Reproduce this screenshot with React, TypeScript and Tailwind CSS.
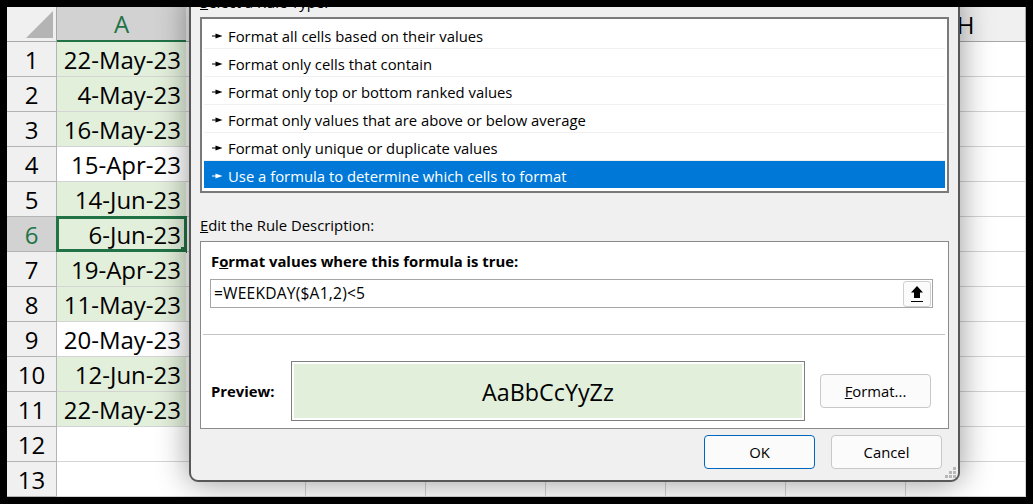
const rows = [
  '22-May-23', '4-May-23', '16-May-23', '15-Apr-23', '14-Jun-23', '6-Jun-23',
  '19-Apr-23', '11-May-23', '20-May-23', '12-Jun-23', '22-May-23', '', '',
];
const plainRows = [3, 8, 11, 12];
const ruleTypes = [
  'Format all cells based on their values',
  'Format only cells that contain',
  'Format only top or bottom ranked values',
  'Format only values that are above or below average',
  'Format only unique or duplicate values',
];
const otherCols = ['B', 'C', 'D', 'E', 'F', 'G', 'H'];

function RuleArrow({ light }: { light?: boolean }) {
  return (
    <svg width="11" height="6" viewBox="0 0 11 6" className="shrink-0" fill={light ? '#ffffff' : '#000000'}>
      <path d="M0 2.4h3.5V0.6L10.5 3 3.5 5.4V3.6H0z" />
    </svg>
  );
}

function Sheet() {
  return (
    <div className="grid grid-cols-[50px_129px_repeat(7,120px)] auto-rows-[35px] bg-white text-[24px] text-black">
      <div className="flex items-end justify-end border-r border-b border-[#a8a8a8] bg-[#f0f0f0] p-[3px]">
        <svg width="27" height="27" viewBox="0 0 27 27">
          <path d="M27 0v27H0z" fill="#b4b4b4" />
        </svg>
      </div>
      <div className="flex items-center justify-center border-b-2 border-[#217346] bg-[#d2d2d2] pt-px text-[#217346]">A</div>
      {otherCols.map((col) => (
        <div key={col} className="flex items-center justify-center border-r border-b border-[#a8a8a8] bg-[#f0f0f0] pt-px">
          {col}
        </div>
      ))}
      {rows.map((value, i) => (
        <div key={i} className="contents">
          <div
            className={`flex items-center justify-center border-r border-b border-[#b4b4b4] pt-px ${
              i === 5 ? 'bg-[#d2d2d2] text-[#217346]' : 'bg-[#f0f0f0]'
            }`}
          >
            {i + 1}
          </div>
          <div
            className={`relative flex items-center justify-end border-b pt-px pr-[5px] ${
              plainRows.includes(i) ? 'border-[#d4d4d4] bg-white' : 'border-[#d4d4d4] bg-[#e2efda]'
            }`}
          >
            {value}
            {i === 5 && (
              <div className="absolute -top-px -right-px -bottom-px -left-px border-[3px] border-[#217346]">
                <div className="absolute -right-[3px] -bottom-[4px] h-[6px] w-[6px] bg-[#217346]" />
              </div>
            )}
          </div>
          {otherCols.map((col) => (
            <div key={col} className="border-r border-b border-[#d4d4d4]" />
          ))}
        </div>
      ))}
    </div>
  );
}

function DialogButton({ children, primary }: { children: React.ReactNode; primary?: boolean }) {
  return (
    <button
      className={`flex h-[34px] w-[111px] items-center justify-center rounded-[4px] border bg-[#fbfbfb] pt-px text-[14.85px] text-black ${
        primary ? 'border-[#0067c0]' : 'border-[#c8c8c8]'
      }`}
    >
      {children}
    </button>
  );
}

function Dialog() {
  return (
    <div className="absolute top-[-16px] left-[182px] flex h-[491px] w-[771px] flex-col rounded-b-[9px] border-2 border-[#585858] bg-[#f0f0f0] pr-[9px] pl-[9px] text-[14.85px] text-black shadow-[0_0_32px_rgba(0,0,0,0.42)]">
      <div className="h-[20px] leading-[18px]">
        <span className="underline">S</span>elect a Rule Type:
      </div>
      <div className="mt-[4px] flex h-[176px] flex-col border-2 border-[#7a7a7a] bg-white px-[2px] pt-[2px]">
        {ruleTypes.map((rule) => (
          <div key={rule} className="flex h-[28px] items-center gap-[5px] border-b border-[#f0f0f0] pt-[3px] pl-[8px]">
            <RuleArrow />
            <span>{rule}</span>
          </div>
        ))}
        <div className="flex h-[27px] items-center gap-[5px] bg-[#0078d7] pt-[3px] pl-[8px] text-white">
          <RuleArrow light />
          <span>Use a formula to determine which cells to format</span>
        </div>
      </div>
      <div className="mt-[22px] h-[20px] leading-[20px]">
        <span className="underline">E</span>dit the Rule Description:
      </div>
      <div className="mt-[6px] flex h-[188px] flex-col border border-[#8a8a8a] bg-white">
        <div className="mt-[9px] ml-[10px] h-[20px] leading-[20px] font-bold">
          F<span className="underline">o</span>rmat values where this formula is true:
        </div>
        <div className="mt-[8px] ml-[9px] flex h-[29px] w-[723px] items-center justify-between border border-[#a6a6a6] pr-[1px] pl-[3px]">
          <span className="text-[15.6px] tracking-[0.2px]">=WEEKDAY($A1,2)&lt;5</span>
          <div className="flex h-[26px] w-[28px] items-center justify-center rounded-[3px] border border-[#d0d0d0] bg-[#fbfbfb]">
            <svg width="14" height="18" viewBox="0 0 14 18" fill="#000000">
              <path d="M7 1l6 6.5H10V13H4V7.5H1z" />
              <rect x="1" y="16" width="12" height="1" />
            </svg>
          </div>
        </div>
        <div className="mt-[26px] mr-[3px] ml-[2px] h-px bg-[#c4c4c4]" />
        <div className="mt-[26px] flex items-center pl-[10px]">
          <span className="w-[80px] pt-px font-bold">Preview:</span>
          <div className="flex h-[60px] w-[514px] items-center justify-center border border-[#7e7e7e] bg-[#e2efda] pt-[2px] text-[23.3px] outline-2 -outline-offset-3 outline-white">
            AaBbCcYyZz
          </div>
          <div className="ml-[15px]">
            <DialogButton>
              <span>
                <span className="underline">F</span>ormat...
              </span>
            </DialogButton>
          </div>
        </div>
      </div>
      <div className="mt-[6px] flex justify-end gap-[16px] pr-[7px]">
        <DialogButton primary>OK</DialogButton>
        <DialogButton>Cancel</DialogButton>
      </div>
      <svg width="12" height="12" viewBox="0 0 12 12" fill="#b8b8b8" className="absolute right-[1px] bottom-[1px]">
        <rect x="8" y="0" width="3" height="3" />
        <rect x="4" y="4" width="3" height="3" />
        <rect x="8" y="4" width="3" height="3" />
        <rect x="0" y="8" width="3" height="3" />
        <rect x="4" y="8" width="3" height="3" />
        <rect x="8" y="8" width="3" height="3" />
      </svg>
    </div>
  );
}

export default function App() {
  return (
    <div className="h-[504px] w-[1033px] bg-black p-[7px] font-['Open_Sans','Noto_Sans',sans-serif]">
      <div className="relative h-[490px] w-[1019px] overflow-hidden">
        <Sheet />
        <Dialog />
      </div>
    </div>
  );
}
